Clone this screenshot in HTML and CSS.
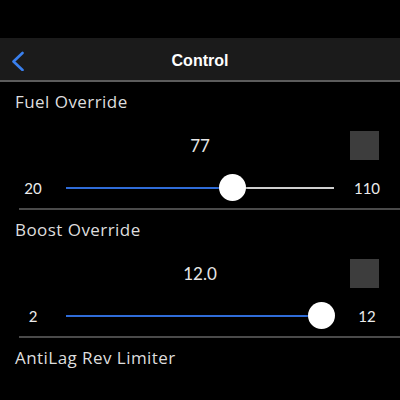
FILE: index.html
```html
<!DOCTYPE html>
<html>
<head>
<meta charset="utf-8">
<link rel="stylesheet" href="styles.css">
</head>
<body>
<div class="screen">
  <div class="nav">
    <div class="nav-left">
      <svg class="back" width="14" height="20" viewBox="0 0 14 20"><polyline points="11.5,2 2.5,10.5 11.5,19" fill="none" stroke="#3a80ee" stroke-width="2.6" stroke-linecap="round" stroke-linejoin="round"/></svg>
    </div>
    <div class="nav-title">Control</div>
    <div class="nav-right"></div>
  </div>

  <div class="section">
    <div class="title">Fuel Override</div>
    <div class="value-row">
      <div></div>
      <div class="value">77</div>
      <div class="box"></div>
    </div>
    <div class="slider-row">
      <div class="lim">20</div>
      <div class="track" style="--p:0.6333">
        <div class="fill"></div>
        <div class="knob"></div>
      </div>
      <div class="lim">110</div>
    </div>
    <div class="divider"></div>
  </div>

  <div class="section">
    <div class="title">Boost Override</div>
    <div class="value-row">
      <div></div>
      <div class="value">12.0</div>
      <div class="box"></div>
    </div>
    <div class="slider-row">
      <div class="lim">2</div>
      <div class="track" style="--p:1">
        <div class="fill"></div>
        <div class="knob"></div>
      </div>
      <div class="lim">12</div>
    </div>
    <div class="divider"></div>
  </div>

  <div class="section">
    <div class="title">AntiLag Rev Limiter</div>
  </div>
</div>
</body>
</html>
```

FILE: styles.css
```css
html, body {
  margin: 0;
  padding: 0;
  background: #000;
}
.screen {
  width: 400px;
  height: 400px;
  overflow: hidden;
  background: #000;
  padding-top: 38px;
  box-sizing: border-box;
  font-family: Lato, "Open Sans", sans-serif;
  color: #e2e2e2;
}
.nav {
  height: 42px;
  background: #1b1b1b;
  border-bottom: 2px solid #5c5c5c;
  display: grid;
  grid-template-columns: 1fr auto 1fr;
  align-items: center;
}
.nav-left {
  display: flex;
  align-items: center;
  padding-left: 11px;
  padding-top: 4px;
}
.back {
  display: block;
}
.nav-title {
  font-family: "Liberation Sans", Arial, sans-serif;
  font-weight: bold;
  font-size: 16px;
  color: #fff;
  padding-top: 4px;
}
.title {
  padding: 10px 0 0 15px;
  font-family: "Open Sans", Lato, sans-serif;
  font-size: 17px;
  letter-spacing: 0.45px;
  line-height: 20px;
  color: #dedede;
}
.value-row {
  margin-top: 19px;
  display: grid;
  grid-template-columns: 1fr auto 1fr;
  align-items: center;
  height: 29px;
}
.value {
  font-size: 17px;
  color: #e6e6e6;
}
.box {
  justify-self: end;
  margin-right: 21px;
  width: 29px;
  height: 29px;
  background: #3d3d3d;
}
.slider-row {
  margin-top: 14px;
  height: 27px;
  display: grid;
  grid-template-columns: 66px 1fr 66px;
  align-items: center;
}
.lim {
  text-align: center;
  font-size: 15px;
  color: #ececec;
}
.track {
  position: relative;
  height: 2px;
  background: #cfcfcf;
}
.fill {
  height: 2px;
  width: calc(13px + (100% - 26px) * var(--p));
  background: #2f6cd8;
}
.knob {
  position: absolute;
  top: -12.5px;
  left: calc((100% - 26px) * var(--p));
  width: 27px;
  height: 27px;
  border-radius: 50%;
  background: #fff;
  box-shadow: 0 1px 3px rgba(0, 0, 0, 0.5);
}
.divider {
  margin: 7px 0 0 19px;
  height: 2px;
  background: #4a4a4a;
}
```
